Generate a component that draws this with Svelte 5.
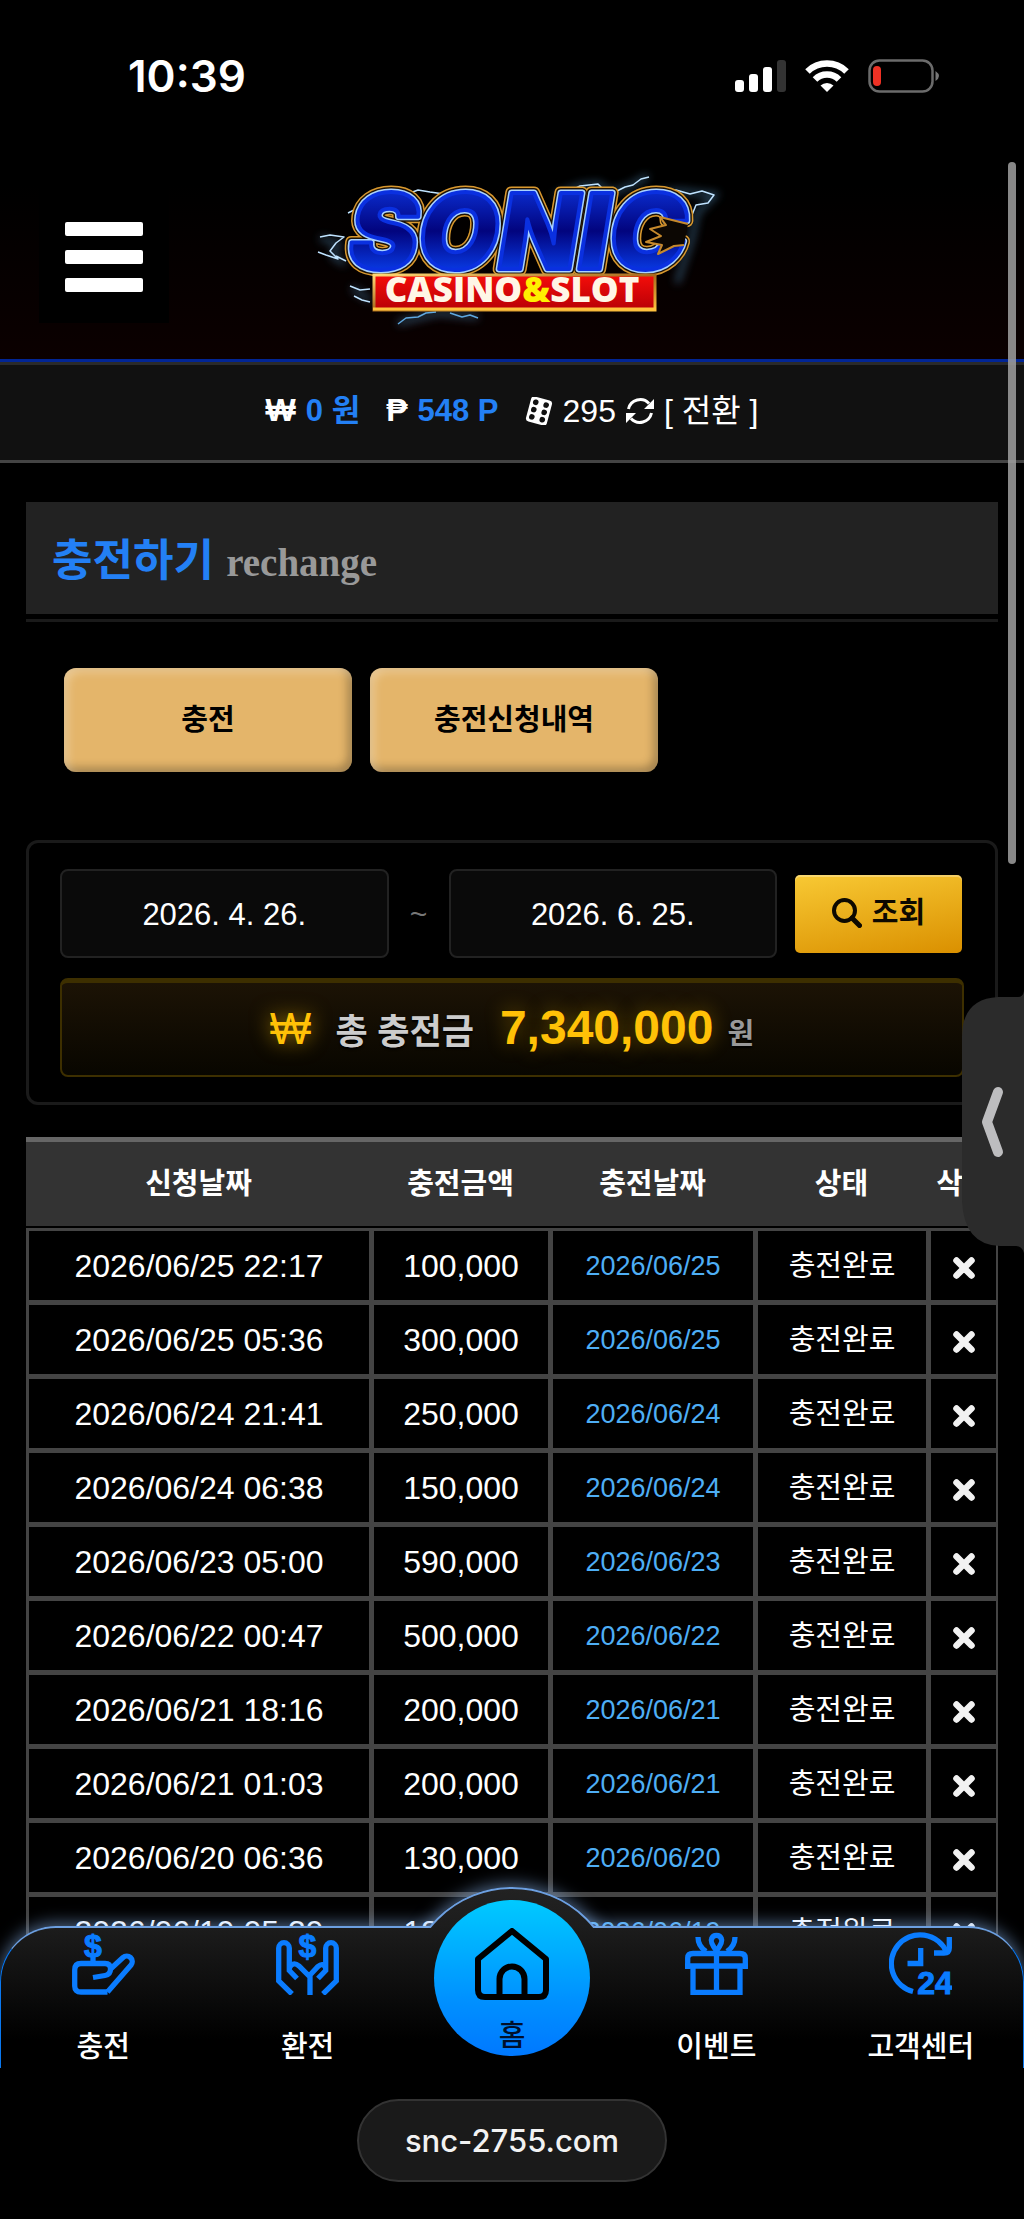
<script>
  let dateFrom = '2026. 4. 26.';
  let dateTo = '2026. 6. 25.';

  const total = '7,340,000';

  let rows = [
    { applied: '2026/06/25 22:17', amount: '100,000', charged: '2026/06/25' },
    { applied: '2026/06/25 05:36', amount: '300,000', charged: '2026/06/25' },
    { applied: '2026/06/24 21:41', amount: '250,000', charged: '2026/06/24' },
    { applied: '2026/06/24 06:38', amount: '150,000', charged: '2026/06/24' },
    { applied: '2026/06/23 05:00', amount: '590,000', charged: '2026/06/23' },
    { applied: '2026/06/22 00:47', amount: '500,000', charged: '2026/06/22' },
    { applied: '2026/06/21 18:16', amount: '200,000', charged: '2026/06/21' },
    { applied: '2026/06/21 01:03', amount: '200,000', charged: '2026/06/21' },
    { applied: '2026/06/20 06:36', amount: '130,000', charged: '2026/06/20' },
    { applied: '2026/06/19 05:39', amount: '180,000', charged: '2026/06/19' },
  ];

  function removeRow(row) {
    rows = rows.filter((r) => r !== row);
  }
</script>

<div class="screen">
  <!-- Phone status bar -->
  <div class="status">
    <span class="time">10:39</span>
    <div class="status-icons">
      <svg width="51" height="32" viewBox="0 0 51 32" aria-hidden="true">
        <rect x="0" y="20" width="9" height="12" rx="3" fill="#fff" />
        <rect x="14" y="14" width="9" height="18" rx="3" fill="#fff" />
        <rect x="28" y="7" width="9" height="25" rx="3" fill="#fff" />
        <rect x="42" y="0" width="9" height="32" rx="3" fill="#333" />
      </svg>
      <svg width="44" height="32" viewBox="0 0 44 32" aria-hidden="true">
        <path d="M2.500 11.500A28 28 0 0 1 41.500 11.500" fill="none" stroke="#fff" stroke-width="6.500" />
        <path d="M10 19.500A17 17 0 0 1 34 19.500" fill="none" stroke="#fff" stroke-width="6.500" />
        <path d="M15.500 25.500A9.500 9.500 0 0 1 28.500 25.500L22 32Z" fill="#fff" />
      </svg>
      <svg width="72" height="34" viewBox="0 0 72 34" aria-hidden="true">
        <rect x="1.500" y="1.500" width="63" height="31" rx="10" fill="none" stroke="#6b6b6b" stroke-width="2.500" />
        <rect x="5" y="7" width="8" height="20" rx="4" fill="#ee3124" />
        <path d="M67.500 12q7 5 0 10Z" fill="#777" />
      </svg>
    </div>
  </div>

  <header>
    <button class="menu" aria-label="메뉴">
      <span></span>
      <span></span>
      <span></span>
    </button>
    <a class="logo" href="/" aria-label="SONIC CASINO&SLOT">
      <svg width="450" height="180" viewBox="-3 0 450 180">
        <defs>
          <linearGradient id="blue" x1="0" y1="0" x2="0" y2="1">
            <stop offset="0.100" stop-color="#0c35e0" />
            <stop offset="0.500" stop-color="#02047e" />
            <stop offset="0.900" stop-color="#0a48ff" />
          </linearGradient>
          <linearGradient id="gold" x1="0" y1="0" x2="1" y2="1">
            <stop offset="0" stop-color="#ffd873" />
            <stop offset="0.500" stop-color="#a8691c" />
            <stop offset="1" stop-color="#ffc23e" />
          </linearGradient>
          <linearGradient id="red" x1="0" y1="0" x2="0" y2="1">
            <stop offset="0" stop-color="#f50d0a" />
            <stop offset="1" stop-color="#b80006" />
          </linearGradient>
          <filter id="glow" x="-20%" y="-40%" width="140%" height="180%">
            <feGaussianBlur stdDeviation="4" />
          </filter>
        </defs>
        <g fill="none" stroke="#3c6a8c" stroke-width="5" opacity="0.700" filter="url(#glow)">
          <path d="M265 36l25-10 18-2 14 9 20-8 16-9" />
          <path d="M370 33l20-2 35 4-18 18-5 25-15 45" />
          <path d="M30 78l18 6-5 12 12 8M62 128l18 12" />
          <path d="M108 163l40-10 40 4" />
        </g>
        <g fill="none" stroke="#bfe3ff" stroke-width="1.500" stroke-linejoin="round">
          <path d="M265 36l13-4 12-6 18-2 5 5 10 4 12-6 8-2 8-6 8-2" />
          <path d="M372 33l14-3 14 4 12-3 12 4-6 8-12 2-4 10" />
          <path d="M120 33l8-3 12 2 14 2M80 36l3 6M58 53l12-6" />
          <path d="M30 77l10-2 14 2-8 6-6 8 8 8-12-4-8-3M46 96l10 5" />
          <path d="M60 126l10 4 10-1M64 136l8 4 8 2" />
          <path d="M108 164l8-6 12-1 8-4 10-1M160 153l12 4 8-2 8 3" stroke="#5fa8e0" />
        </g>
        <!-- Outlines of the wordmark, widest first -->
        <g class="sonic" stroke-linejoin="round">
          <use href="#word" stroke="#d9992f" stroke-width="13" />
          <use href="#word" stroke="#1c1206" stroke-width="10" />
          <use href="#word" stroke="#a9d2ff" stroke-width="7" />
          <g stroke="#0a30e0" stroke-width="4" fill="url(#blue)">
            <text id="word" x="228" y="109">SONIC</text>
          </g>
        </g>
        <path d="M398 64L370 57L376 65L360 69L371 76L356 82L372 85L368 94L384 86L394 85" fill="#0c0703" stroke="#c6892c" stroke-width="2" stroke-linejoin="round" />
        <rect x="84" y="115" width="281" height="35" fill="url(#red)" stroke="url(#gold)" stroke-width="3" />
        <path d="M83 149H366" stroke="#ffc23e" stroke-width="3" />
        <text class="casino" x="222" y="142" fill="#fff6e6">CASINO<tspan fill="#fff000">&amp;</tspan>SLOT</text>
      </svg>
    </a>
  </header>

  <div class="wallet">
    <span class="item"><b>₩</b><strong>0 원</strong></span>
    <span class="item"><b>₱</b><strong>548 P</strong></span>
    <span class="item">
      <svg width="28" height="28" viewBox="1 1 26 26" aria-hidden="true">
        <g transform="rotate(15 14 14)">
          <rect x="4" y="2" width="20" height="24" rx="3" fill="#fff" />
          <g fill="#111">
            <circle cx="9" cy="7" r="2.600" />
            <circle cx="19" cy="7" r="2.600" />
            <circle cx="9" cy="14" r="2.600" />
            <circle cx="19" cy="14" r="2.600" />
            <circle cx="9" cy="21" r="2.600" />
            <circle cx="19" cy="21" r="2.600" />
          </g>
        </g>
      </svg>
      295
      <svg width="28" height="28" viewBox="0 0 28 28" aria-hidden="true">
        <g fill="none" stroke="#fff" stroke-width="3">
          <path d="M2.500 12A12 12 0 0 1 23 6.500" />
          <path d="M25.500 16A12 12 0 0 1 5 21.500" />
        </g>
        <path d="M28 2V12H18ZM0 26V16H10Z" fill="#fff" />
      </svg>
      <a href="/exchange">[ 전환 ]</a>
    </span>
  </div>

  <main>
    <h1>충전하기 <small>rechange</small></h1>
    <hr />

    <div class="tabs">
      <button>충전</button>
      <button>충전신청내역</button>
    </div>

    <section class="filter">
      <form class="dates" on:submit|preventDefault>
        <input type="text" aria-label="시작일" bind:value={dateFrom} />
        <span class="tilde">~</span>
        <input type="text" aria-label="종료일" bind:value={dateTo} />
        <button class="search">
          <svg width="30" height="30" viewBox="0 0 30 30" aria-hidden="true">
            <circle cx="12.500" cy="12.500" r="10.500" fill="none" stroke="#0d0900" stroke-width="4" />
            <path d="M20 20l7.500 7.500" stroke="#0d0900" stroke-width="5" stroke-linecap="round" />
          </svg>
          조회
        </button>
      </form>
      <div class="total">
        <span class="won">₩</span>
        <span class="label">총 충전금</span>
        <strong>{total}</strong>
        <span class="unit">원</span>
      </div>
    </section>

    <table>
      <thead>
        <tr>
          <th>신청날짜</th>
          <th class="amount">충전금액</th>
          <th class="charged">충전날짜</th>
          <th class="state">상태</th>
          <th class="remove">삭제</th>
        </tr>
      </thead>
      <tbody>
        {#each rows as row (row.applied)}
          <tr>
            <td>{row.applied}</td>
            <td>{row.amount}</td>
            <td class="blue">{row.charged}</td>
            <td class="done">충전완료</td>
            <td>
              <button class="delete" aria-label="{row.applied} 삭제" on:click={() => removeRow(row)}>
                <svg width="22" height="22" viewBox="0 0 22 22">
                  <path d="M3.500 3.500l15 15M18.500 3.500l-15 15" stroke="#f2f2f2" stroke-width="6.500" stroke-linecap="round" />
                </svg>
              </button>
            </td>
          </tr>
        {/each}
      </tbody>
    </table>
  </main>

  <div class="scrollbar"></div>

  <button class="handle" aria-label="열기">
    <svg width="62" height="262" viewBox="0 0 62 262">
      <path d="M62 0Q61 6 56 6H36Q0 8 0 46V210Q2 254 38 255H54Q60 255 62 262Z" fill="#2b2b2b" />
      <path d="M36 101L25 131L36 161" fill="none" stroke="#bdbdbf" stroke-width="10" stroke-linecap="round" stroke-linejoin="round" />
    </svg>
  </button>

  <div class="dock">
    <nav>
      <div class="dome"></div>
      <a href="/charge">
        <svg class="icon" viewBox="0 0 63 63">
          <path d="M35.500 60H9Q2.700 60 2.700 54V38Q2.700 31.500 9 31.500H33Q38.500 31.500 38.500 37Q38.500 42.500 33 43.500L21 45.500" />
          <path d="M38 37.500L51 25.500A5.500 5.500 0 0 1 59 33L35.500 60" />
          <path d="M21 25V31" />
          <text x="21" y="25">$</text>
        </svg>
        <span>충전</span>
      </a>
      <a href="/withdraw">
        <svg class="icon" viewBox="0 0 63 63">
          <path d="M16 62L2.700 49V16A5.300 5.300 0 0 1 13.300 16V38.500L21 46.500" />
          <path d="M47 62L60.300 49V16A5.300 5.300 0 0 0 49.700 16V38.500L42 46.500" />
          <path d="M13.300 36Q17 29 23 34L34 45V63M34 43L42 34.500Q47 30 49.700 36" />
          <text x="31.500" y="25">$</text>
        </svg>
        <span>환전</span>
      </a>
      <a class="home" href="/">
        <svg width="74" height="72" viewBox="0 0 74 72">
          <g fill="none" stroke="#000" stroke-width="6" stroke-linejoin="round">
            <path d="M37 3L71 31V62Q71 69 64 69H10Q3 69 3 62V31Z" />
            <path d="M24.500 69V51A12.500 12.500 0 0 1 49.500 51V69" />
          </g>
        </svg>
        <span>홈</span>
      </a>
      <a href="/event">
        <svg class="icon" viewBox="0 0 63 63">
          <path d="M2.700 37V26Q2.700 21.500 8 21.500H55Q60.300 21.500 60.300 26V37" />
          <path d="M0 34H63M8 36V60.300H55V36M31.500 21V60" />
          <path d="M31.500 19Q25 10 26.500 7A5.300 5.300 0 0 1 36.500 7Q38 10 31.500 19Z" />
          <path d="M13 5Q13 14 21 19.500M50 5Q50 14 42 19.500" />
        </svg>
        <span>이벤트</span>
      </a>
      <a href="/support">
        <svg class="icon" viewBox="0 0 63 63">
          <path d="M24 59.500A28.800 28.800 0 1 1 57.500 20" />
          <path d="M60.300 5V16Q60.300 21 55 21H45" />
          <path d="M31.700 16V31.500H18.500" />
          <text x="46" y="62">24</text>
        </svg>
        <span>고객센터</span>
      </a>
    </nav>
    <div class="browser">
      <button class="url">snc-2755.com</button>
    </div>
  </div>
</div>

<style>
  :global(body) {
    margin: 0;
    background: #000;
  }

  .screen {
    height: 100vh;
    overflow: hidden;
    position: relative;
    background: #000;
    color: #fff;
    font-family: "Liberation Sans", "Noto Sans CJK KR", sans-serif;
    font-size: 32px;
  }

  button,
  input {
    font-family: inherit;
    border: 0;
    margin: 0;
    padding: 0;
    cursor: pointer;
  }

  a {
    color: inherit;
    text-decoration: none;
  }

  svg {
    display: block;
  }

  .status {
    display: flex;
    justify-content: space-between;
    box-sizing: border-box;
    height: 141px;
    padding: 49px 84px 0 128px;
  }

  .time {
    font-family: Inter, sans-serif;
    font-weight: 600;
    font-size: 44px;
    line-height: 54px;
  }

  .status-icons {
    display: flex;
    align-items: center;
    gap: 19px;
    height: 54px;
  }

  header {
    display: grid;
    grid-template-columns: 1fr auto 1fr;
    align-items: center;
    height: 218px;
    background: linear-gradient(#000 20%, #0b0000);
    border-bottom: 3px solid #012595;
  }

  .menu {
    display: flex;
    flex-direction: column;
    justify-content: center;
    align-items: center;
    gap: 14px;
    width: 130px;
    height: 146px;
    margin-left: 39px;
    padding-top: 14px;
    background: #000;
  }

  .menu span {
    width: 78px;
    height: 14px;
    border-radius: 2px;
    background: #fff;
  }

  .sonic {
    fill: none;
    font-family: Inter, sans-serif;
    font-size: 104px;
    font-weight: 900;
    font-style: italic;
    text-anchor: middle;
  }

  .casino {
    font-family: "Open Sans", sans-serif;
    font-size: 35px;
    font-weight: 800;
    text-anchor: middle;
  }

  .wallet {
    display: flex;
    justify-content: center;
    align-items: center;
    gap: 26px;
    box-sizing: border-box;
    height: 101px;
    padding-bottom: 4px;
    border-top: 3px solid #2a2a2a;
    border-bottom: 3px solid #444;
    background: #111;
  }

  .item {
    display: flex;
    align-items: baseline;
    gap: 10px;
    line-height: 40px;
  }

  .item svg {
    align-self: center;
  }

  .wallet strong {
    color: #2380f5;
    font-size: 31px;
  }

  main {
    padding: 39px 26px 0;
  }

  h1 {
    height: 112px;
    margin: 0;
    padding: 0 26px;
    background: #222;
    color: #2380f5;
    font-size: 44px;
    line-height: 118px;
  }

  h1 small {
    color: #999;
    font-family: "Liberation Serif", serif;
    font-size: 39px;
  }

  hr {
    height: 3px;
    margin: 5px 0 0;
    border: 0;
    background: #1a1a1a;
  }

  .tabs {
    display: flex;
    gap: 18px;
    padding: 46px 38px 68px;
  }

  .tabs button {
    box-sizing: border-box;
    width: 288px;
    height: 104px;
    padding-bottom: 6px;
    border-radius: 12px;
    background: #e4b56a;
    box-shadow: inset 4px 4px 10px rgba(255, 255, 255, 0.3), inset -4px -4px 10px rgba(0, 0, 0, 0.3);
    font-size: 29px;
    font-weight: 700;
    color: #000;
  }

  .filter {
    padding: 26px 31px 25px;
    border: 3px solid #1a1a1a;
    border-radius: 12px;
  }

  .dates {
    display: flex;
    align-items: center;
  }

  .dates input {
    flex: 1;
    min-width: 0;
    box-sizing: border-box;
    height: 89px;
    padding-top: 2px;
    border: 2px solid #222;
    border-radius: 8px;
    background: #0a0a0a;
    color: #fff;
    font-size: 31px;
    text-align: center;
  }

  .tilde {
    width: 60px;
    text-align: center;
    color: #777;
    font-size: 30px;
  }

  .search {
    display: flex;
    align-items: center;
    justify-content: center;
    gap: 10px;
    width: 167px;
    height: 78px;
    margin: 0 2px 0 18px;
    padding-bottom: 2px;
    box-sizing: border-box;
    border-radius: 5px;
    background: linear-gradient(170deg, #f8c934, #da9000);
    box-shadow: inset 0 2px 0 rgba(255, 255, 255, 0.3);
    color: #0d0900;
    font-size: 29px;
    font-weight: 700;
    line-height: 36px;
  }

  .total {
    display: flex;
    justify-content: center;
    align-items: baseline;
    box-sizing: border-box;
    height: 99px;
    margin-top: 20px;
    border: 2px solid #3d2f00;
    border-top-width: 5px;
    border-radius: 8px;
    background: linear-gradient(#1c1305, #080600);
    color: #ccc;
    line-height: 90px;
    text-shadow: 0 2px 2px #000;
  }

  .total .won {
    color: #ffc107;
    font-size: 44px;
    text-shadow: 0 0 20px rgba(255, 193, 7, 0.6);
  }

  .total .label {
    margin: 0 26px 0 24px;
    font-size: 35px;
    font-weight: 700;
  }

  .total strong {
    color: #ffc107;
    font-size: 48px;
    text-shadow: 0 0 20px rgba(255, 193, 7, 0.4);
  }

  .total .unit {
    margin-left: 14px;
    color: #999;
    font-size: 29px;
    font-weight: 700;
  }

  table {
    width: 100%;
    margin-top: 32px;
    border-spacing: 0;
    table-layout: fixed;
    text-align: center;
  }

  th {
    height: 84px;
    padding: 0;
    border-top: 5px solid #666;
    border-bottom: 2px solid #000;
    background: #333;
    font-size: 29px;
    line-height: 40px;
    white-space: nowrap;
  }

  .amount {
    width: 179px;
  }

  .charged {
    width: 205px;
  }

  .state {
    width: 173px;
  }

  .remove {
    width: 70px;
  }

  td {
    box-sizing: border-box;
    height: 74px;
    padding: 0;
    border: solid #444;
    border-width: 3px 2px 2px 3px;
    line-height: 40px;
  }

  .blue {
    color: #4eaef5;
    font-size: 27px;
  }

  .done {
    font-size: 29px;
  }

  .delete {
    background: none;
    vertical-align: middle;
  }

  .scrollbar {
    position: absolute;
    top: 162px;
    right: 8px;
    width: 8px;
    height: 702px;
    border-radius: 4px;
    background: rgba(160, 160, 160, 0.85);
  }

  .handle {
    position: absolute;
    top: 991px;
    right: 0;
    background: none;
  }

  .dock {
    position: absolute;
    bottom: 0;
    left: 0;
    right: 0;
  }

  nav {
    position: relative;
    display: grid;
    grid-template-columns: repeat(5, 1fr);
    box-sizing: border-box;
    height: 142px;
    border: solid #0a78f0;
    border-width: 2px 1px 0;
    border-top-color: #6c9fe0;
    border-radius: 56px 56px 0 0;
    background: linear-gradient(#1c1c1c, #000 80%);
    box-shadow: 0 -3px 16px rgba(150, 195, 255, 0.5);
  }

  /* Only the cap above the bar shows */
  .dome {
    position: absolute;
    top: -41px;
    left: 50%;
    box-sizing: border-box;
    width: 212px;
    height: 212px;
    margin-left: -106px;
    border: 2px solid #6c9fe0;
    border-radius: 50%;
    background: linear-gradient(#222, #1c1c1c 20%);
    box-shadow: 0 -3px 16px rgba(150, 195, 255, 0.5);
    clip-path: inset(-30px -30px 171px -30px);
  }

  nav a {
    display: flex;
    flex-direction: column;
    align-items: center;
    justify-content: space-between;
    padding: 4px 0 0;
    font-size: 29px;
    font-weight: 500;
    line-height: 42px;
  }

  .icon {
    width: 63px;
    height: 63px;
    fill: none;
    stroke: #0a7cff;
    stroke-width: 5.300;
  }

  .icon text {
    fill: #0a7cff;
    stroke-width: 1;
    font-size: 32px;
    font-weight: 700;
    text-anchor: middle;
  }

  nav .home {
    position: relative;
    justify-self: center;
    box-sizing: border-box;
    width: 156px;
    height: 156px;
    margin-top: -28px;
    padding: 28px 0 0;
    border-radius: 50%;
    background: linear-gradient(#00caff, #0090ff 65%, #0078ff);
    color: #00102a;
    line-height: 40px;
  }

  .browser {
    position: relative;
    display: flex;
    justify-content: center;
    align-items: flex-start;
    box-sizing: border-box;
    height: 151px;
    padding-top: 31px;
    background: #000;
  }

  .url {
    height: 83px;
    padding: 0 46px;
    border: 2px solid #333;
    border-radius: 42px;
    background: #1a1a1a;
    color: #f2f2f2;
    font-family: Inter, sans-serif;
    font-size: 31px;
    font-weight: 500;
  }
</style>
